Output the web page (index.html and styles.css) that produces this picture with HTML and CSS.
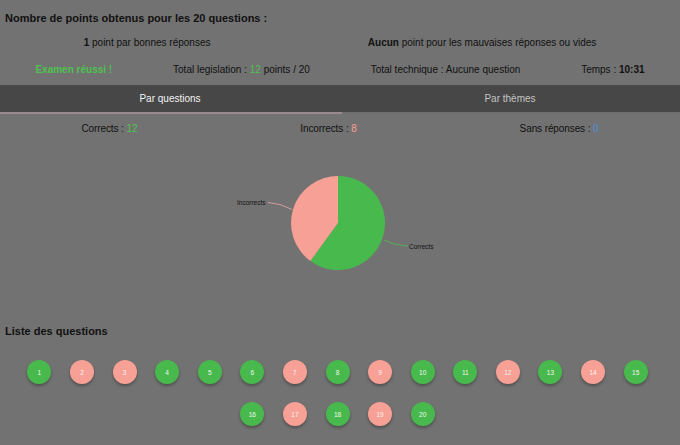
FILE: index.html
```html
<!DOCTYPE html>
<html lang="fr">
<head>
<meta charset="utf-8">
<title>Résultats</title>
<link rel="stylesheet" href="styles.css">
</head>
<body>
<div class="page">
  <h1 class="title">Nombre de points obtenus pour les 20 questions :</h1>
  <div class="row rules">
    <span><b>1</b> point par bonnes réponses</span>
    <span><b>Aucun</b> point pour les mauvaises réponses ou vides</span>
  </div>
  <div class="row totals">
    <span class="success">Examen réussi !</span>
    <span>Total legislation : <span class="green">12</span> points / 20</span>
    <span>Total technique : Aucune question</span>
    <span>Temps : <b>10:31</b></span>
  </div>
  <div class="tabs">
    <div class="tab active">Par questions</div>
    <div class="tab">Par thèmes</div>
  </div>
  <div class="indicator"><div class="indicator-bar"></div></div>
  <div class="stats">
    <span>Corrects : <span class="green">12</span></span>
    <span>Incorrects : <span class="pink">8</span></span>
    <span>Sans réponses : <span class="blue">0</span></span>
  </div>
  <div class="chart">
    <svg width="680" height="165" viewBox="0 140 680 165">
      <path d="M338,223 L338,176 A47,47 0 1,1 310.37,261.02 Z" fill="#48ba4d"/>
      <path d="M338,223 L310.37,261.02 A47,47 0 0,1 338,176 Z" fill="#f7a095"/>
      <path d="M268,202.5 Q280,203 292,209.5" fill="none" stroke="#e8a8a8" stroke-width="0.8"/>
      <path d="M384,240 Q396,246 408,246" fill="none" stroke="#55b855" stroke-width="0.8"/>
      <text x="237" y="204.5" class="lbl">Incorrects</text>
      <text x="409" y="248.5" class="lbl">Corrects</text>
    </svg>
  </div>
  <h2 class="subtitle">Liste des questions</h2>
  <div class="questions">
    <div class="q ok">1</div>
    <div class="q ko">2</div>
    <div class="q ko">3</div>
    <div class="q ok">4</div>
    <div class="q ok">5</div>
    <div class="q ok">6</div>
    <div class="q ko">7</div>
    <div class="q ok">8</div>
    <div class="q ko">9</div>
    <div class="q ok">10</div>
    <div class="q ok">11</div>
    <div class="q ko">12</div>
    <div class="q ok">13</div>
    <div class="q ko">14</div>
    <div class="q ok">15</div>
    <div class="q ok">16</div>
    <div class="q ko">17</div>
    <div class="q ok">18</div>
    <div class="q ko">19</div>
    <div class="q ok">20</div>
  </div>
</div>
</body>
</html>
```

FILE: styles.css
```css
html, body {
  margin: 0;
  padding: 0;
  background: #727272;
  height: 100%;
  overflow: hidden;
}
body {
  font-family: "Liberation Sans", Arial, sans-serif;
  color: #111;
  font-size: 10px;
}
.page {
  padding: 0 5px;
}
.title {
  margin: 0;
  padding-top: 11px;
  font-size: 11px;
  line-height: 14px;
  font-weight: bold;
  color: #111;
}
.row {
  display: flex;
  justify-content: space-around;
  line-height: 14px;
}
.rules {
  margin-top: 11px;
}
.totals {
  margin-top: 13px;
}
.success {
  color: #4fc24f;
  font-weight: bold;
}
.green { color: #4fc24f; }
.pink { color: #f7a095; }
.blue { color: #4a8fe0; }
.tabs {
  margin: 8px -5px 0;
  display: flex;
  background: #474747;
  height: 27px;
}
.tab {
  flex: 1;
  display: flex;
  align-items: center;
  justify-content: center;
  color: #c4c4c4;
  font-size: 10px;
}
.tab.active {
  color: #f2f2f2;
}
.indicator {
  margin: 0 -5px;
  height: 2px;
  background: #6e6e6e;
}
.indicator-bar {
  width: 342px;
  height: 2px;
  background: #9a8a8e;
}
.stats {
  margin: 8px -5px 0;
  display: flex;
  justify-content: space-around;
  line-height: 14px;
  font-size: 10px;
  letter-spacing: -0.1px;
}
.chart {
  margin: 4px -5px 0;
  height: 165px;
}
.chart svg {
  display: block;
}
.lbl {
  font-family: "Liberation Sans", Arial, sans-serif;
  font-size: 6.5px;
  fill: #111;
}
.subtitle {
  margin: 19px 0 0;
  font-size: 11px;
  line-height: 14px;
  font-weight: bold;
}
.questions {
  margin: 13px 5px 0 0;
  display: flex;
  flex-wrap: wrap;
  justify-content: center;
}
.q {
  width: 24px;
  height: 24px;
  margin: 9px 9.3px;
  border-radius: 50%;
  display: flex;
  align-items: center;
  justify-content: center;
  color: #f4f4f4;
  font-size: 6.5px;
  box-shadow: 0 2px 3px rgba(0, 0, 0, 0.3);
}
.q.ok { background: #48ba4d; }
.q.ko { background: #f7a095; }
```
